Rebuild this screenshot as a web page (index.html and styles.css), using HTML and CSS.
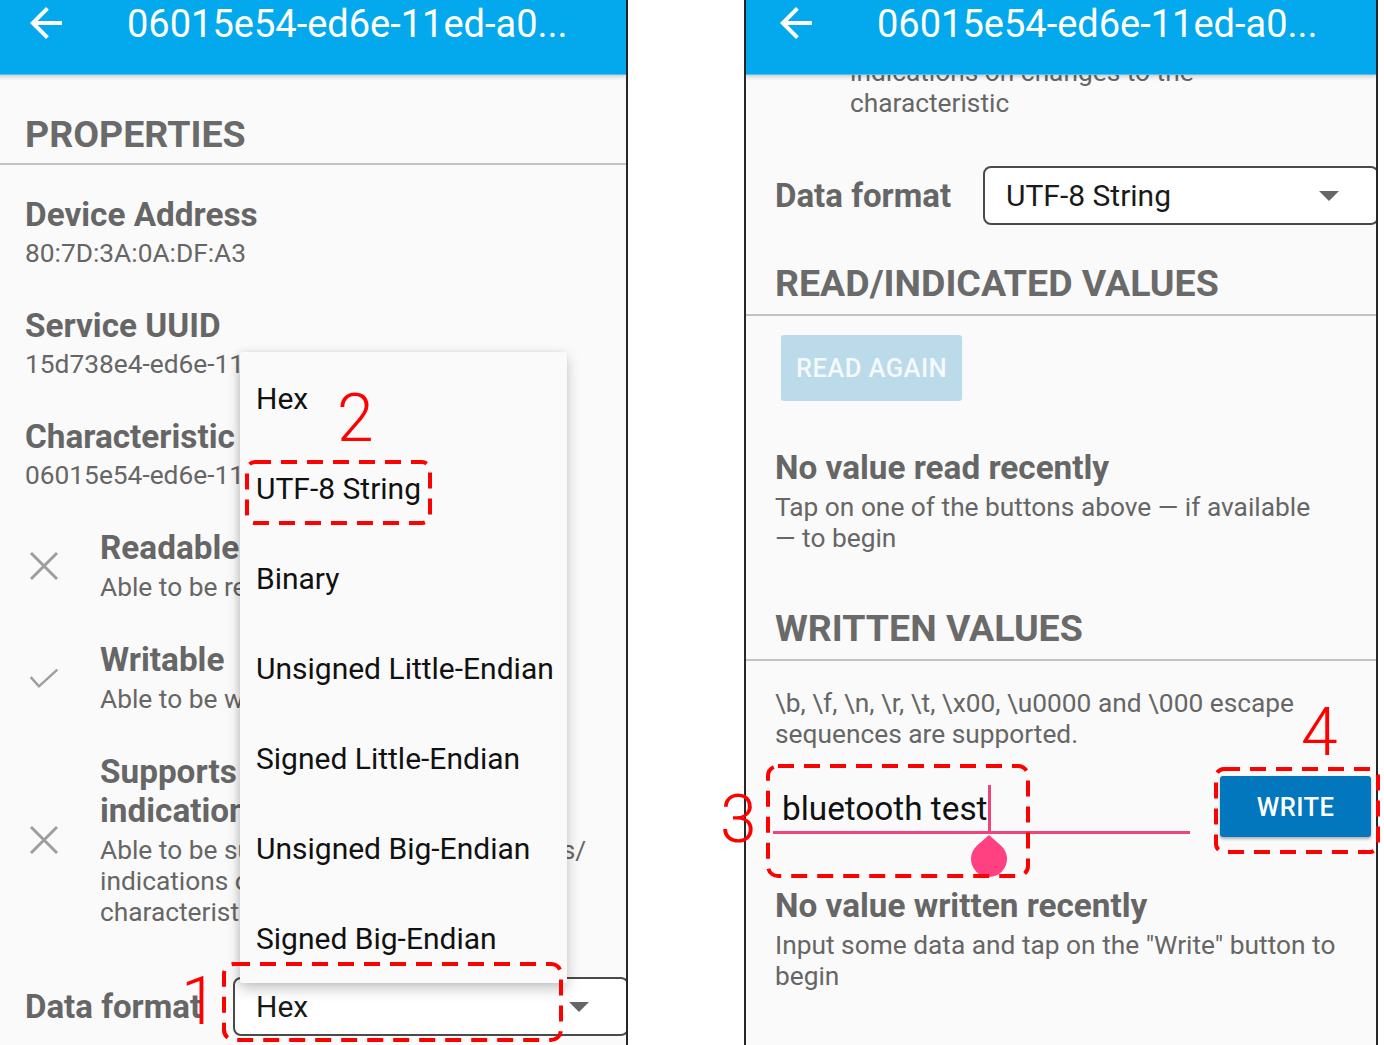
FILE: index.html
```html
<!DOCTYPE html>
<html>
<head>
<meta charset="utf-8">
<link rel="stylesheet" href="styles.css">
</head>
<body>
<div class="page">
  <div class="frame frame-left">
    <div class="phone">
      <header class="appbar">
        <svg class="back" viewBox="0 0 24 24"><path d="M20 11H7.83l5.59-5.59L12 4l-8 8 8 8 1.41-1.41L7.83 13H20v-2z"/></svg>
        <h1 class="title">06015e54-ed6e-11ed-a0...</h1>
      </header>
      <div class="content">
        <h2 class="section first">PROPERTIES</h2>
        <div class="rule"></div>
        <div class="field first">
          <h3 class="item">Device Address</h3>
          <p class="desc">80:7D:3A:0A:DF:A3</p>
        </div>
        <div class="field">
          <h3 class="item">Service UUID</h3>
          <p class="desc">15d738e4-ed6e-11ed-a05b-0242ac120003</p>
        </div>
        <div class="field">
          <h3 class="item">Characteristic UUID</h3>
          <p class="desc">06015e54-ed6e-11ed-a05b-0242ac120003</p>
        </div>
        <div class="prop">
          <div class="prop-icon"><svg viewBox="0 0 30 30"><path d="M2 2L28 28M28 2L2 28"/></svg></div>
          <div class="prop-text">
            <h3 class="item">Readable</h3>
            <p class="desc">Able to be read from</p>
          </div>
        </div>
        <div class="prop">
          <div class="prop-icon"><svg viewBox="0 0 36 30"><path d="M2 14L12 25L34 5"/></svg></div>
          <div class="prop-text">
            <h3 class="item">Writable</h3>
            <p class="desc">Able to be written to</p>
          </div>
        </div>
        <div class="prop">
          <div class="prop-icon"><svg viewBox="0 0 30 30"><path d="M2 2L28 28M28 2L2 28"/></svg></div>
          <div class="prop-text">
            <h3 class="item">Supports notifications/ indications</h3>
            <p class="desc">Able to be su<span class="wide">bscribed for notification</span>s/ indications on changes to the characteristic</p>
          </div>
        </div>
        <div class="format-row">
          <span class="format-label">Data format</span>
          <div class="spinner">
            <span class="spinner-value">Hex</span>
            <svg class="drop" viewBox="0 0 10 5"><path d="M0 0l5 5 5-5z"/></svg>
          </div>
        </div>
      </div>
      <ul class="popup">
        <li>Hex</li>
        <li>UTF-8 String</li>
        <li>Binary</li>
        <li>Unsigned Little-Endian</li>
        <li>Signed Little-Endian</li>
        <li>Unsigned Big-Endian</li>
        <li>Signed Big-Endian</li>
      </ul>
    </div>
  </div>

  <div class="gap"></div>

  <div class="frame frame-right">
    <div class="phone">
      <header class="appbar">
        <svg class="back" viewBox="0 0 24 24"><path d="M20 11H7.83l5.59-5.59L12 4l-8 8 8 8 1.41-1.41L7.83 13H20v-2z"/></svg>
        <h1 class="title">06015e54-ed6e-11ed-a0...</h1>
      </header>
      <div class="content">
        <p class="desc indent scrolled">Able to be subscribed for notifications/ indications on changes to the characteristic</p>
        <div class="format-row right">
          <span class="format-label">Data format</span>
          <div class="spinner">
            <span class="spinner-value">UTF-8 String</span>
            <svg class="drop" viewBox="0 0 10 5"><path d="M0 0l5 5 5-5z"/></svg>
          </div>
        </div>
        <h2 class="section">READ/INDICATED VALUES</h2>
        <div class="rule"></div>
        <div class="btn btn-read">READ AGAIN</div>
        <div class="status">
          <h3 class="item">No value read recently</h3>
          <p class="desc">Tap on one of the buttons above — if available — to begin</p>
        </div>
        <h2 class="section written">WRITTEN VALUES</h2>
        <div class="rule"></div>
        <p class="desc escape">\b, \f, \n, \r, \t, \x00, \u0000 and \000 escape sequences are supported.</p>
        <div class="write-row">
          <div class="input">
            <span class="typed">bluetooth test</span><span class="caret"><svg class="handle" viewBox="0 0 40 44"><path d="M20 0L31.9 10.5A18 18 0 1 1 8.1 10.5Z"/></svg></span>
          </div>
          <div class="btn btn-write">WRITE</div>
        </div>
        <div class="status written-status">
          <h3 class="item">No value written recently</h3>
          <p class="desc">Input some data and tap on the "Write" button to begin</p>
        </div>
      </div>
    </div>
  </div>

  <svg class="marks" viewBox="0 0 1384 1045">
    <rect x="224" y="964" width="337" height="76" rx="10"/>
    <rect x="247" y="462" width="183" height="61" rx="8"/>
    <rect x="768" y="766" width="260" height="110" rx="10"/>
    <rect x="1216" y="769" width="162" height="83" rx="8"/>
  </svg>
  <span class="num n1">1</span>
  <span class="num n2">2</span>
  <span class="num n3">3</span>
  <span class="num n4">4</span>
</div>
</body>
</html>
```
FILE: styles.css
```css
* { box-sizing: border-box; }
html, body { margin: 0; padding: 0; background: #fff; }
body { font-family: Roboto, "Noto Sans", "Liberation Sans", sans-serif; }

.page {
  position: relative;
  display: flex;
  width: 1384px;
  height: 1045px;
  overflow: hidden;
  background: #fff;
}

.frame { height: 1045px; overflow: hidden; flex: none; }
.frame-left { width: 628px; border-right: 2px solid #262626; }
.frame-left .phone { margin-left: -4px; }
.gap { width: 116px; flex: none; }
.frame-right { width: 634px; border-left: 2px solid #262626; border-right: 2px solid #262626; }

.phone {
  position: relative;
  width: 630px;
  height: 1045px;
  background: #fafafa;
  display: flex;
  flex-direction: column;
}

.appbar {
  position: relative;
  z-index: 2;
  flex: none;
  height: 75px;
  background: #03a9ec;
  display: flex;
  align-items: flex-start;
  box-shadow: 0 2px 4px rgba(0,0,0,0.18);
  border-bottom: 1px solid #4cc3f2;
}
.back { width: 48px; height: 48px; margin: -1px 0 0 26px; fill: #fff; flex: none; }
.title {
  margin: 0 0 0 57px;
  font-size: 38px;
  line-height: 48px;
  font-weight: 400;
  color: #fff;
  white-space: nowrap;
}

.content {
  flex: 1;
  overflow: hidden;
  position: relative;
  z-index: 1;
}

.section {
  margin: 0;
  padding-left: 29px;
  font-size: 37.5px;
  line-height: 44px;
  font-weight: 700;
  color: #6a6a6a;
}
.section.first { margin-top: 37px; }
.rule { height: 2px; background: #c2c2c2; margin-top: 7px; }

.item {
  margin: 0;
  font-size: 33.3px;
  line-height: 39px;
  font-weight: 700;
  color: #666;
}
.desc {
  margin: 4px 0 0;
  font-size: 26.3px;
  line-height: 31px;
  color: #666;
}
.wide { letter-spacing: 1.2px; }

.field { padding-left: 29px; margin-top: 37px; white-space: nowrap; }
.field.first { margin-top: 30px; }

.prop { display: flex; align-items: center; margin-top: 37px; }
.prop .desc { margin-top: 5px; }
.prop-icon { width: 104px; flex: none; display: flex; justify-content: center; padding-right: 8px; }
.prop-icon svg { width: 30px; height: 30px; fill: none; stroke: #9e9e9e; stroke-width: 3; }
.prop-text { width: 500px; flex: none; }

.format-row { display: flex; align-items: center; margin-top: 49px; }
.format-label {
  width: 237px;
  flex: none;
  padding-left: 29px;
  font-size: 33px;
  font-weight: 700;
  color: #666;
  white-space: nowrap;
}
.spinner {
  width: 396px;
  height: 59px;
  flex: none;
  background: #fff;
  border: 2px solid #4a4a4a;
  border-radius: 8px;
  display: flex;
  align-items: center;
  padding-left: 21px;
}
.spinner-value { flex: 1; font-size: 30px; color: #1a1a1a; }
.drop { width: 20px; height: 10px; fill: #666; margin-right: 38px; }

.popup {
  position: absolute;
  z-index: 3;
  left: 244px;
  top: 352px;
  width: 327px;
  height: 631px;
  margin: 0;
  padding: 2px 0 0 16px;
  list-style: none;
  background: #fafafa;
  box-shadow: 0 6px 14px rgba(0,0,0,0.22), -2px 0 6px rgba(0,0,0,0.08);
  border-radius: 2px;
}
.popup li { height: 90px; line-height: 90px; font-size: 30px; color: #111; white-space: nowrap; }

/* right panel */
.indent { padding-left: 104px; width: 600px; }
.scrolled { margin-top: -49px; }
.format-row.right { margin-top: 47px; }
.section + .rule { margin-top: 9px; }
.frame-left .section + .rule { margin-top: 7px; }
.format-row.right + .section { margin-top: 36px; }

.btn {
  display: flex;
  align-items: center;
  justify-content: center;
  font-size: 25.6px;
  font-weight: 500;
  letter-spacing: 0.4px;
  color: #fff;
  border-radius: 3px;
}
.btn-read {
  width: 181px;
  height: 66px;
  margin: 19px 0 0 35px;
  background: #bbdaea;
  color: #f4f9fc;
}
.status { padding-left: 29px; margin-top: 47px; }
.status .desc { margin-top: 5px; width: 590px; }
.status:not(.written-status) .desc { width: 545px; }
.section.written { margin-top: 52px; }
.escape { padding-left: 29px; margin-top: 27px; width: 600px; }

.write-row { display: flex; align-items: flex-start; margin-top: 26px; padding-left: 27px; }
.input {
  position: relative;
  width: 417px;
  flex: none;
  padding: 9px 0 0 9px;
  height: 58px;
  border-bottom: 3px solid #ee4479;
  font-size: 33.3px;
  line-height: 40px;
  color: #111;
  white-space: nowrap;
}
.caret {
  display: inline-block;
  position: relative;
  width: 3px;
  height: 47px;
  margin-left: 1px;
  background: #ee4479;
  vertical-align: -12px;
}
.handle { position: absolute; left: -19px; top: 50px; width: 40px; height: 44px; fill: #ff4081; }
.btn-write {
  width: 151px;
  height: 61px;
  margin-left: 30px;
  background: #0277bd;
  box-shadow: 0 2px 3px rgba(0,0,0,0.3);
}
.written-status { margin-top: 49px; }

/* annotations */
.marks {
  position: absolute;
  left: 0;
  top: 0;
  width: 1384px;
  height: 1045px;
  z-index: 10;
  pointer-events: none;
}
.marks rect { fill: none; stroke: #ff0000; stroke-width: 4; stroke-dasharray: 16 10; }
.num {
  position: absolute;
  z-index: 11;
  font-family: Roboto, "Noto Sans", sans-serif;
  font-weight: 300;
  font-size: 66px;
  line-height: 66px;
  color: #ff0000;
}
.n1 { left: 181px; top: 969px; }
.n2 { left: 337px; top: 386px; }
.n3 { left: 720px; top: 787px; }
.n4 { left: 1301px; top: 700px; }
```
